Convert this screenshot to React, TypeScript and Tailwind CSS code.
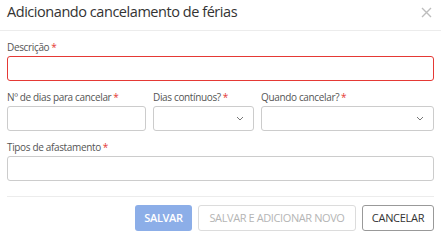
import React from "react";

const Req = () => <span className="text-[#e53935] ml-[2px]">*</span>;

const Chevron = () => (
  <svg width="8" height="5" viewBox="0 0 8 5" className="text-[#777]">
    <path d="M1 1l3 3 3-3" fill="none" stroke="currentColor" strokeWidth="1" />
  </svg>
);

const lbl = "text-[10px] leading-[14px] text-[#555] h-[16px] tracking-[-0.35px]";

export default function App() {
  return (
    <div
      className="w-[441px] h-[233px] bg-white text-[#333] overflow-hidden"
      style={{ fontFamily: '"Open Sans", sans-serif' }}
    >
      <div className="flex items-center justify-between h-[31px] px-[7px] border-b border-[#ececec]">
        <span className="text-[14.5px] tracking-[-0.45px] text-[#333] leading-none -mt-[6px]">Adicionando cancelamento de férias</span>
        <svg width="11" height="11" viewBox="0 0 11 11" className="mr-[2px] -mt-[5px]">
          <path d="M1 1l9 9M10 1l-9 9" stroke="#bdbdbd" strokeWidth="1.4" />
        </svg>
      </div>
      <div className="px-[7px] pt-[9px] flex flex-col">
        <label className={lbl}>
          Descrição<Req />
        </label>
        <div className="h-[25px] border border-[#e53935] rounded-[3px]" />
        <div className="flex gap-[7px] mt-[9px]">
          <div className="w-[139px] flex flex-col">
            <label className={lbl}>
              Nº de dias para cancelar<Req />
            </label>
            <div className="h-[25px] border border-[#ccc] rounded-[3px]" />
          </div>
          <div className="w-[101px] flex flex-col">
            <label className={lbl}>
              Dias contínuos?<Req />
            </label>
            <div className="h-[25px] border border-[#ccc] rounded-[3px] flex items-center justify-end pr-[9px]">
              <Chevron />
            </div>
          </div>
          <div className="flex-1 flex flex-col">
            <label className={lbl}>
              Quando cancelar?<Req />
            </label>
            <div className="h-[25px] border border-[#ccc] rounded-[3px] flex items-center justify-end pr-[9px]">
              <Chevron />
            </div>
          </div>
        </div>
        <label className={lbl + " mt-[9px]"}>
          Tipos de afastamento<Req />
        </label>
        <div className="h-[25px] border border-[#ccc] rounded-[3px]" />
      </div>
      <div className="mt-[15px] mx-[7px] border-t border-[#ececec] flex justify-end gap-[6px] pt-[8px]">
        <button className="h-[26px] w-[57px] rounded-[3px] bg-[#8caee8] text-white text-[11px] font-semibold tracking-[-0.3px]">
          SALVAR
        </button>
        <button className="h-[26px] w-[158px] rounded-[3px] border border-[#dcdcdc] text-[#b5b5b5] text-[11px] tracking-[-0.4px]">
          SALVAR E ADICIONAR NOVO
        </button>
        <button className="h-[26px] w-[72px] rounded-[3px] border border-[#999] text-[#333] text-[11px] tracking-[-0.3px]">
          CANCELAR
        </button>
      </div>
    </div>
  );
}
